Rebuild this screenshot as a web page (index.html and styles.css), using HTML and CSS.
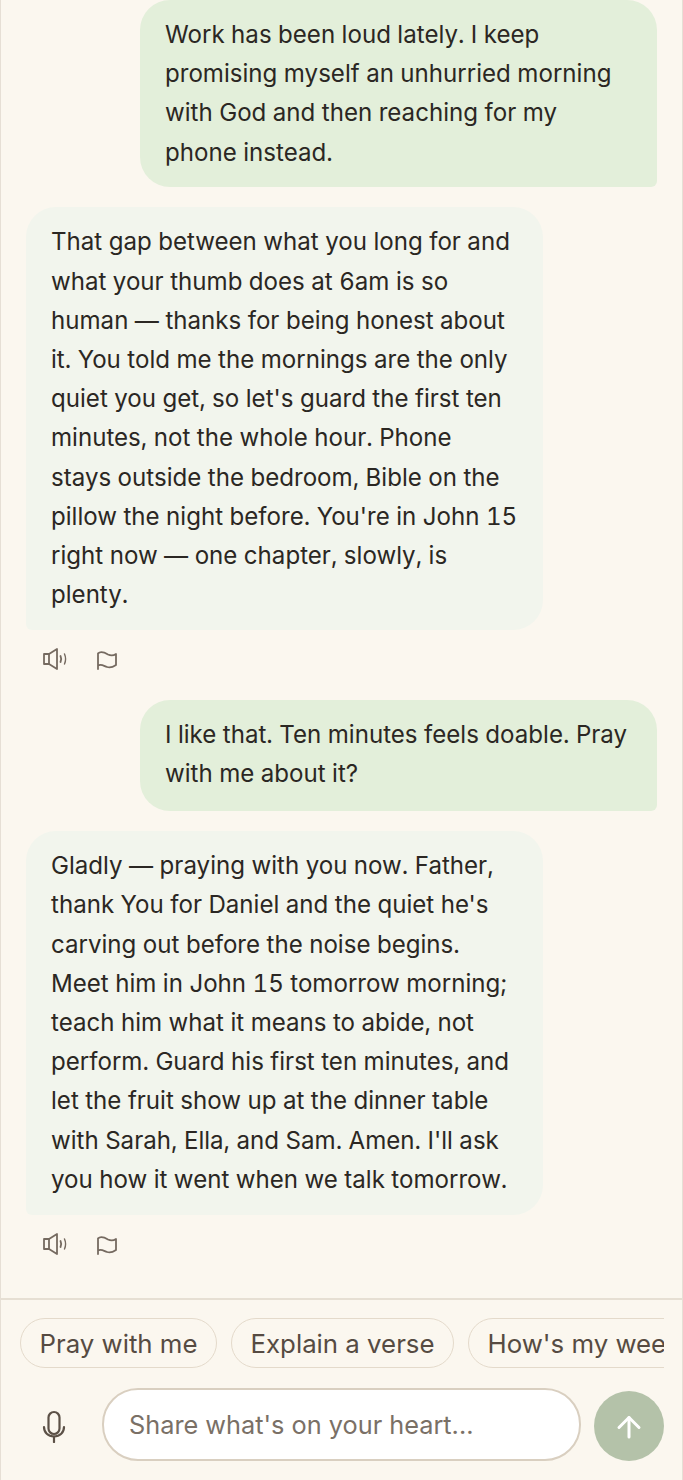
FILE: index.html
```html
<!DOCTYPE html>
<html>
<head>
<meta charset="utf-8">
<link rel="stylesheet" href="styles.css">
</head>
<body>
	<div class="app">
		<div class="messages">
			<div class="bubble user">Work has been loud lately. I keep promising myself an unhurried morning with God and then reaching for my phone instead.</div>
			<div class="bubble bot">That gap between what you long for and what your thumb does at 6am is so human — thanks for being honest about it. You told me the mornings are the only quiet you get, so let's guard the first ten minutes, not the whole hour. Phone<br>stays outside the bedroom, Bible on the pillow the night before. You're in John 15 right now — one chapter, slowly, is plenty.</div>
			<div class="actions">
				<svg width="26" height="24" viewBox="0 0 26 24" fill="none" stroke="#756a60" stroke-width="1.8" stroke-linejoin="round" stroke-linecap="round"><path d="M2 7h5l8-5v20L7 17H2z"/><path d="M7 7v10"/><path d="M18.500 9c.9 1.900.9 4.100 0 6"/><path d="M22.500 7c1.400 3.200 1.400 6.800 0 10" stroke-width="1.400"/></svg>
				<svg width="22" height="24" viewBox="0 0 22 24" fill="none" stroke="#756a60" stroke-width="1.800" stroke-linejoin="round" stroke-linecap="round"><path d="M2 22V6.500C4 4.500 7 4.500 12 7.500c3 1.500 5 1.500 8-.5V18c-3 2-6 3-9 2S5 16.500 2 18.500"/></svg>
			</div>
			<div class="bubble user short">I like that. Ten minutes feels doable. Pray with me about it?</div>
			<div class="bubble bot">Gladly — praying with you now. Father, thank You for Daniel and the quiet he's carving out before the noise begins. Meet him in John 15 tomorrow morning; teach him what it means to abide, not perform. Guard his first ten minutes, and let the fruit show up at the dinner table with Sarah, Ella, and Sam. Amen. I'll ask you how it went when we talk tomorrow.</div>
			<div class="actions">
				<svg width="26" height="24" viewBox="0 0 26 24" fill="none" stroke="#756a60" stroke-width="1.8" stroke-linejoin="round" stroke-linecap="round"><path d="M2 7h5l8-5v20L7 17H2z"/><path d="M7 7v10"/><path d="M18.500 9c.9 1.900.9 4.100 0 6"/><path d="M22.500 7c1.400 3.200 1.400 6.800 0 10" stroke-width="1.400"/></svg>
				<svg width="22" height="24" viewBox="0 0 22 24" fill="none" stroke="#756a60" stroke-width="1.800" stroke-linejoin="round" stroke-linecap="round"><path d="M2 22V6.500C4 4.500 7 4.500 12 7.500c3 1.500 5 1.500 8-.5V18c-3 2-6 3-9 2S5 16.500 2 18.500"/></svg>
			</div>
		</div>
		<div class="footer">
			<div class="chips">
				<button class="chip">Pray with me</button>
				<button class="chip">Explain a verse</button>
				<button class="chip">How's my week going?</button>
			</div>
			<div class="composer">
				<svg class="mic" width="26" height="36" viewBox="0 0 26 36" fill="none" stroke="#5c5147" stroke-width="2.200" stroke-linecap="round"><rect x="7.500" y="5" width="11" height="22" rx="5.500"/><path d="M3 20c0 5.500 4 9.500 10 9.500s10-4 10-9.500"/><path d="M13 29.500V35"/></svg>
				<div class="input">Share what's on your heart...</div>
				<div class="send">
					<svg width="30" height="30" viewBox="0 0 30 30" fill="none" stroke="#fff" stroke-width="3" stroke-linecap="round" stroke-linejoin="round"><path d="M15 26V6.500"/><path d="M5 16.500l10-10 10 10"/></svg>
				</div>
			</div>
		</div>
	</div>
</body>
</html>
```

FILE: styles.css
```css
html, body {
	margin: 0;
	padding: 0;
}
body {
	background: #fbf7ef;
	font-family: Inter, "Liberation Sans", sans-serif;
	color: #2b2723;
}
.app {
	width: 683px;
	height: 1480px;
	box-sizing: border-box;
	border-left: 1px solid #e6dfd5;
	border-right: 1px solid #e6dfd5;
	display: flex;
	flex-direction: column;
	overflow: hidden;
}
.messages {
	flex: 1;
	display: flex;
	flex-direction: column;
	padding: 0 25px;
}
.bubble {
	width: 517px;
	box-sizing: border-box;
	padding: 15px 25px 15.500px;
	font-size: 24.100px;
	line-height: 39.200px;
	font-variant-numeric: tabular-nums;
	margin-bottom: 20px;
}
.user {
	align-self: flex-end;
	background: #e3efda;
	border-radius: 30px 30px 6px 30px;
}
.short {
	padding-bottom: 18px;
}
.bot {
	background: #f2f5ed;
	border-radius: 30px 30px 30px 6px;
	margin-bottom: 0;
}
.actions {
	display: flex;
	align-items: center;
	gap: 28px;
	height: 70px;
	padding-left: 16px;
	padding-bottom: 12px;
	box-sizing: border-box;
}
.footer {
	border-top: 2px solid #e6dfd3;
	padding: 18px 19px 19px 19px;
	height: 182px;
	box-sizing: border-box;
}
.chips {
	display: flex;
	gap: 14px;
	overflow: hidden;
	width: 644px;
}
.chip {
	flex: none;
	height: 50px;
	padding: 0 18.500px;
	border: 1.500px solid #e4dacb;
	border-radius: 25px;
	background: transparent;
	font-family: inherit;
	font-size: 25.800px;
	color: #564b42;
}
.composer {
	display: flex;
	align-items: center;
	margin-top: 20px;
}
.mic {
	flex: none;
	margin-left: 21px;
}
.input {
	flex: none;
	width: 479px;
	height: 73px;
	box-sizing: border-box;
	margin-left: 35px;
	padding-left: 25px;
	display: flex;
	align-items: center;
	background: #fff;
	border: 2px solid #d9cfc0;
	border-radius: 36px;
	font-size: 25.300px;
	color: #7a7066;
}
.send {
	flex: none;
	width: 70px;
	height: 70px;
	margin-left: 13px;
	margin-top: 3px;
	border-radius: 50%;
	background: #b4c2a9;
	display: flex;
	align-items: center;
	justify-content: center;
}
```
